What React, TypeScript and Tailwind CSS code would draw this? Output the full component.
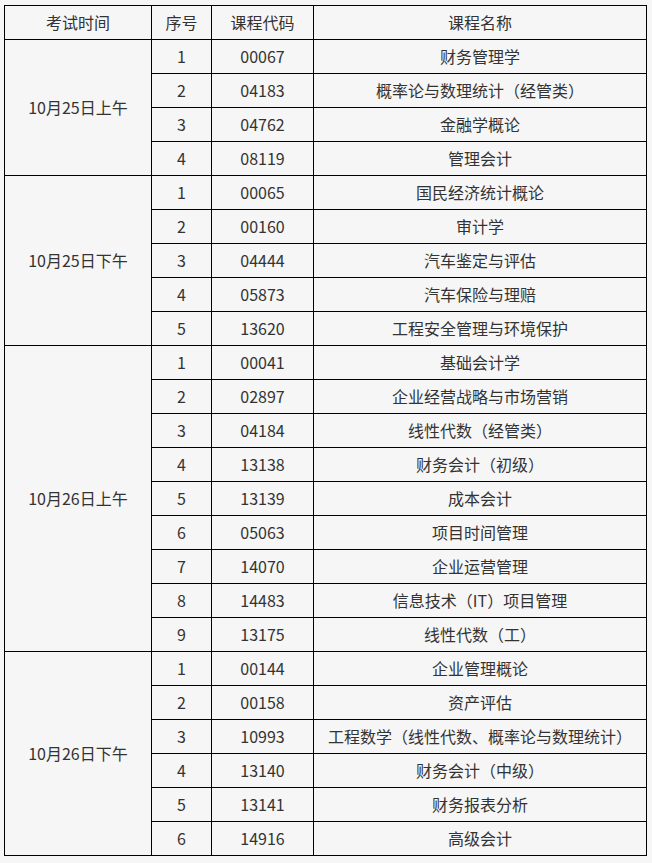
import React from "react";

type Group = { time: string; rows: [string, string][] };

const groups: Group[] = [
  {
    time: "10月25日上午",
    rows: [
      ["00067", "财务管理学"],
      ["04183", "概率论与数理统计（经管类）"],
      ["04762", "金融学概论"],
      ["08119", "管理会计"],
    ],
  },
  {
    time: "10月25日下午",
    rows: [
      ["00065", "国民经济统计概论"],
      ["00160", "审计学"],
      ["04444", "汽车鉴定与评估"],
      ["05873", "汽车保险与理赔"],
      ["13620", "工程安全管理与环境保护"],
    ],
  },
  {
    time: "10月26日上午",
    rows: [
      ["00041", "基础会计学"],
      ["02897", "企业经营战略与市场营销"],
      ["04184", "线性代数（经管类）"],
      ["13138", "财务会计（初级）"],
      ["13139", "成本会计"],
      ["05063", "项目时间管理"],
      ["14070", "企业运营管理"],
      ["14483", "信息技术（IT）项目管理"],
      ["13175", "线性代数（工）"],
    ],
  },
  {
    time: "10月26日下午",
    rows: [
      ["00144", "企业管理概论"],
      ["00158", "资产评估"],
      ["10993", "工程数学（线性代数、概率论与数理统计）"],
      ["13140", "财务会计（中级）"],
      ["13141", "财务报表分析"],
      ["14916", "高级会计"],
    ],
  },
];

const cell = "border border-black text-center align-middle p-0 pb-[1px]";

export default function App() {
  return (
    <div
      className="w-[652px] h-[863px] bg-[#f6f6f6] pt-[5px] pl-[4px] text-[#333] text-[16px] leading-[20px]"
      style={{ fontFamily: '"Noto Sans CJK SC", "Noto Sans", sans-serif' }}
    >
      <table className="border-collapse w-[643px] table-fixed">
        <colgroup>
          <col className="w-[147px]" />
          <col className="w-[60px]" />
          <col className="w-[102px]" />
          <col />
        </colgroup>
        <tbody>
          <tr className="h-[34px]">
            <td className={cell}>考试时间</td>
            <td className={cell}>序号</td>
            <td className={cell}>课程代码</td>
            <td className={cell}>课程名称</td>
          </tr>
          {groups.map((g) =>
            g.rows.map((r, i) => (
              <tr key={g.time + i} className="h-[34px]">
                {i === 0 && (
                  <td className={cell} rowSpan={g.rows.length}>
                    {g.time}
                  </td>
                )}
                <td className={cell}>{i + 1}</td>
                <td className={cell}>{r[0]}</td>
                <td className={cell}>{r[1]}</td>
              </tr>
            ))
          )}
        </tbody>
      </table>
    </div>
  );
}
